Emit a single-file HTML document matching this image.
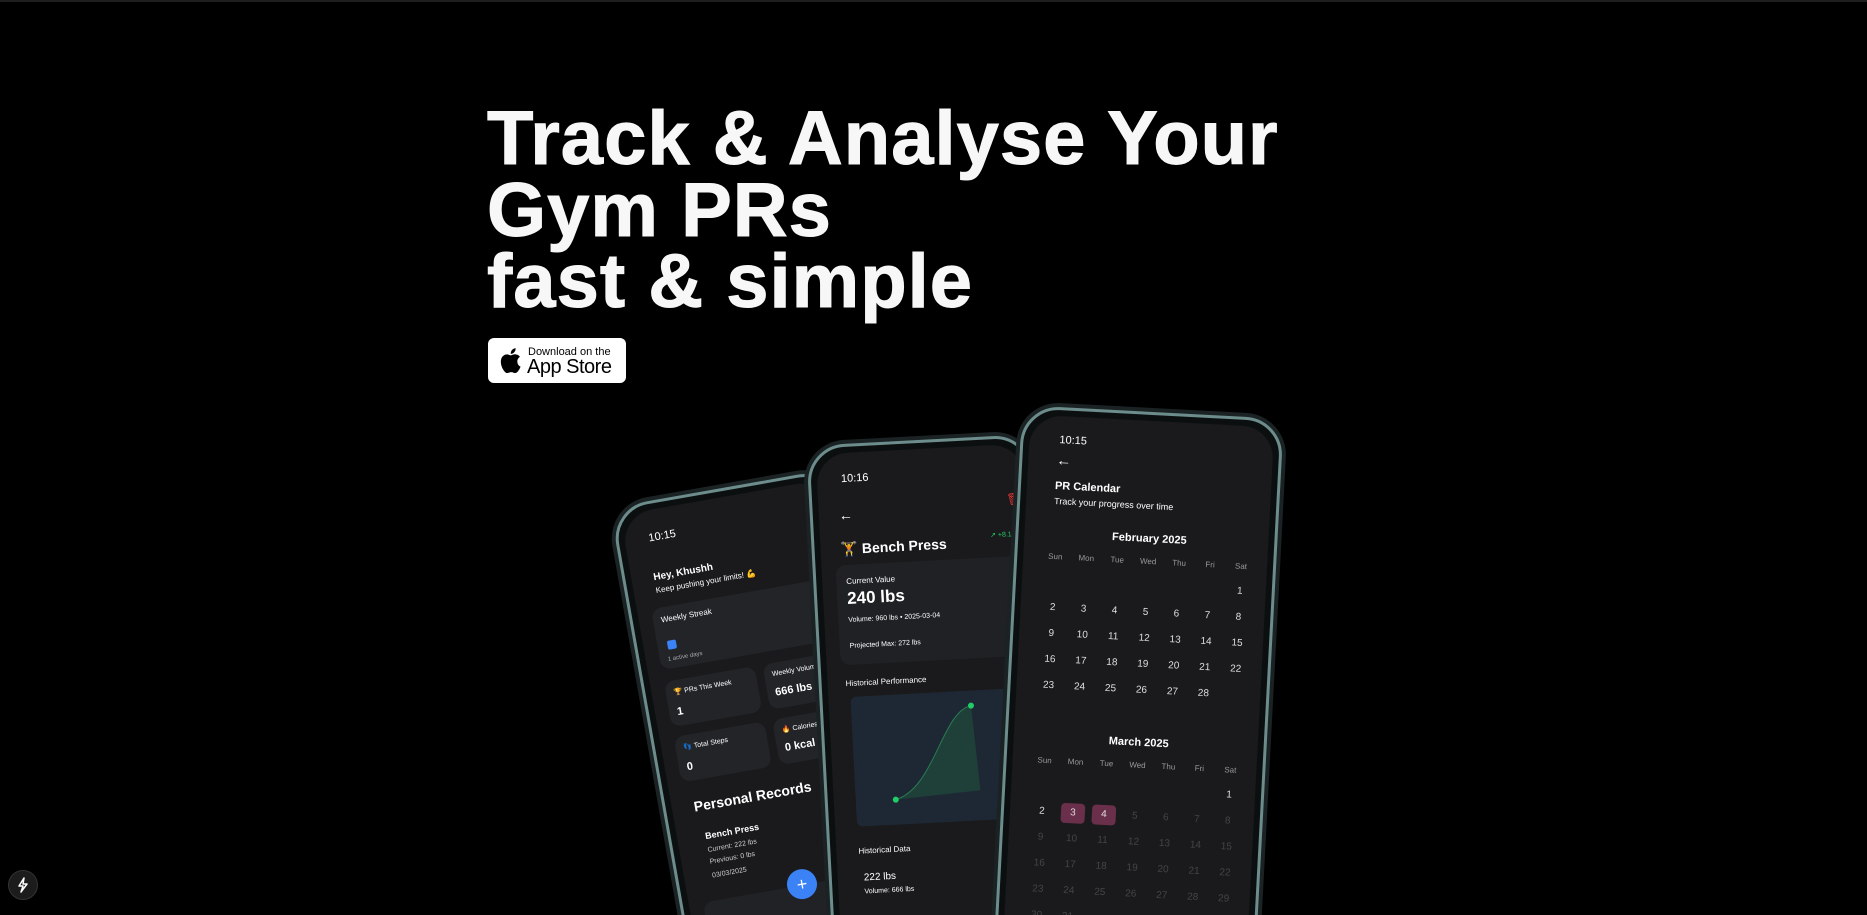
<!DOCTYPE html>
<html><head><meta charset="utf-8"><style>
*{margin:0;padding:0;box-sizing:border-box}
html,body{width:1867px;height:915px;background:#000;overflow:hidden;font-family:"Liberation Sans",sans-serif;color:#fff}
.wrap{position:relative;width:1867px;height:915px;overflow:hidden}
.topline{position:absolute;left:0;top:0;width:1867px;height:2px;background:#1e1e1e}
h1{position:absolute;left:487px;top:103px;font-size:76px;line-height:71.5px;font-weight:700;letter-spacing:1px;color:#f7f7f7;-webkit-text-stroke:1px #f7f7f7}
.btn{position:absolute;left:488px;top:338px;width:138px;height:45px;background:#fff;border-radius:6px;color:#000}
.btn .s{position:absolute;left:40px;top:8px;font-size:11px}
.btn .b{position:absolute;left:39px;top:18px;font-size:20px;letter-spacing:-0.5px}
.phone{position:absolute;border-radius:38px;background:#0c0f10;border:3px solid #6d8c8c;box-shadow:0 0 0 4px #1a2224;overflow:hidden}
.scr{position:absolute;inset:6px;border-radius:32px;background:#1a1a1c;overflow:hidden}
.t{position:absolute;white-space:nowrap}
.card{position:absolute;background:#222428;border-radius:10px}
.bolt{position:absolute;left:8px;top:870px;width:30px;height:30px;border-radius:50%;background:#1c1c1c;border:1px solid #333}
</style></head><body><div class="wrap">
<div class="topline"></div>
<h1>Track &amp; Analyse Your<br>Gym PRs<br>fast &amp; simple</h1>
<div class="btn">
<svg style="position:absolute;left:10px;top:9px" width="24" height="27" viewBox="0 0 24 28"><path fill="#000" d="M19.6 14.9c0-3.2 2.6-4.7 2.7-4.8-1.5-2.2-3.8-2.5-4.6-2.5-1.9-.2-3.8 1.1-4.8 1.1s-2.5-1.1-4.1-1.1C6.7 7.7 4.7 8.9 3.6 10.8c-2.3 4-.6 9.8 1.6 13 1.1 1.6 2.4 3.3 4 3.2 1.6-.1 2.2-1 4.1-1s2.5 1 4.1 1c1.7 0 2.8-1.6 3.800-3.1 1.2-1.8 1.7-3.5 1.7-3.6-.1 0-3.3-1.3-3.3-5.4zM16.5 5.3c.9-1.1 1.5-2.6 1.3-4.1-1.3.1-2.8.9-3.7 1.900-.8.9-1.5 2.5-1.3 4 1.4.1 2.8-.7 3.7-1.8z"/></svg>
<div class="t s">Download on the</div><div class="t b">App Store</div></div>

<!-- phone 1 -->
<div class="phone" style="left:608px;top:488px;width:228px;height:700px;transform:rotate(-10deg);transform-origin:50% 0">
<div class="scr">
<div class="t" style="left:24px;top:22px;font-size:11px">10:15</div>
<div class="t" style="left:22px;top:62px;font-size:10px;font-weight:700">Hey, Khushh</div>
<div class="t" style="left:22px;top:76px;font-size:8px">Keep pushing your limits! 💪</div>
<div class="card" style="left:14px;top:98px;width:200px;height:62px"><div class="t" style="left:8px;top:8px;font-size:8px">Weekly Streak</div><div style="position:absolute;left:10px;top:34px;width:9px;height:9px;border-radius:2px;background:#3b82f6"></div><div class="t" style="left:8px;top:50px;font-size:6px;color:#aaa">1 active days</div></div>
<div class="card" style="left:14px;top:172px;width:92px;height:46px"><div class="t" style="left:8px;top:8px;font-size:7px">🏆 PRs This Week</div><div class="t" style="left:8px;top:26px;font-size:11px;font-weight:700">1</div></div>
<div class="card" style="left:114px;top:172px;width:96px;height:46px"><div class="t" style="left:8px;top:8px;font-size:7px">Weekly Volume</div><div class="t" style="left:8px;top:24px;font-size:11px;font-weight:700">666 lbs</div></div>
<div class="card" style="left:14px;top:228px;width:92px;height:46px"><div class="t" style="left:8px;top:8px;font-size:7px">👣 Total Steps</div><div class="t" style="left:8px;top:26px;font-size:11px;font-weight:700">0</div></div>
<div class="card" style="left:114px;top:228px;width:96px;height:46px"><div class="t" style="left:8px;top:8px;font-size:7px">🔥 Calories Burn</div><div class="t" style="left:8px;top:24px;font-size:11px;font-weight:700">0 kcal</div></div>
<div class="t" style="left:22px;top:292px;font-size:14px;font-weight:700">Personal Records</div>
<div class="t" style="left:28px;top:326px;font-size:9px;font-weight:700">Bench Press</div>
<div class="t" style="left:28px;top:342px;font-size:7px;color:#ccc">Current: 222 lbs</div>
<div class="t" style="left:28px;top:354px;font-size:7px;color:#ccc">Previous: 0 lbs</div>
<div class="t" style="left:28px;top:368px;font-size:7px;color:#ccc">03/03/2025</div>
<div class="card" style="left:14px;top:396px;width:200px;height:40px;background:#202226"></div>
<div style="position:absolute;left:100px;top:380px;width:30px;height:30px;border-radius:50%;background:#3b82f6;text-align:center;line-height:30px;font-size:18px">+</div>
</div></div>

<!-- phone 2 -->
<div class="phone" style="left:806px;top:440px;width:225px;height:700px;transform:rotate(-3deg);transform-origin:50% 0">
<div class="scr">
<div class="t" style="left:24px;top:20px;font-size:11px">10:16</div>
<div class="t" style="left:20px;top:54px;font-size:14px">←</div>
<div class="t" style="left:188px;top:48px;font-size:12px;color:#d33">🗑</div>
<div class="t" style="left:20px;top:88px;font-size:14px;font-weight:700">🏋 Bench Press</div>
<div class="t" style="left:170px;top:86px;font-size:7px;color:#2c6">↗ +8.1%</div>
<div class="card" style="left:14px;top:112px;width:200px;height:100px;background:#1f2124">
<div class="t" style="left:10px;top:12px;font-size:8px">Current Value</div>
<div class="t" style="left:10px;top:24px;font-size:17px;font-weight:700">240 lbs</div>
<div class="t" style="left:10px;top:52px;font-size:7px">Volume: 960 lbs • 2025-03-04</div>
<div class="t" style="left:10px;top:78px;font-size:7px">Projected Max: 272 lbs</div></div>
<div class="t" style="left:18px;top:226px;font-size:8px">Historical Performance</div>
<div style="position:absolute;left:22px;top:244px;width:186px;height:130px;background:#1e2834;border-radius:6px">
<svg width="186" height="130"><path d="M40 105 C80 95 90 20 120 15 L125 100 Z" fill="#1e4a3a" opacity=".7"/><path d="M40 105 C80 95 90 20 120 15" stroke="#2a7a55" fill="none"/><circle cx="40" cy="105" r="3" fill="#2c6"/><circle cx="120" cy="15" r="3" fill="#2c6"/></svg></div>
<div class="t" style="left:22px;top:394px;font-size:8px">Historical Data</div>
<div class="t" style="left:26px;top:420px;font-size:10px">222 lbs</div>
<div class="t" style="left:26px;top:436px;font-size:7px">Volume: 666 lbs</div>
</div></div>

<!-- phone 3 -->
<div class="phone" style="left:1022px;top:412px;width:262px;height:700px;transform:rotate(3deg);transform-origin:50% 0">
<div class="scr">
<div class="t" style="left:30px;top:18px;font-size:11px">10:15</div>
<div class="t" style="left:28px;top:36px;font-size:15px">←</div>
<div class="t" style="left:28px;top:64px;font-size:11px;font-weight:700">PR Calendar</div>
<div class="t" style="left:28px;top:80px;font-size:9px">Track your progress over time</div>
<div class="t" style="left:0;width:250px;text-align:center;top:112px;font-size:11px;font-weight:700">February 2025</div>
<div class="t" style="left:0;width:250px;text-align:center;top:316px;font-size:11px;font-weight:700">March 2025</div>
</div></div>
<script>
function cal(top,startDay,n,dimFrom,hl){
 var s=document.querySelectorAll('.scr')[2];
 var d=['Sun','Mon','Tue','Wed','Thu','Fri','Sat'];
 var h='';
 for(var i=0;i<7;i++)h+='<div class="t" style="left:'+(20+i*31)+'px;width:24px;text-align:center;top:'+top+'px;font-size:8px;color:#999">'+d[i]+'</div>';
 for(var k=1;k<=n;k++){var p=startDay+k-1,c=p%7,r=Math.floor(p/7);
  var col=k>=dimFrom?'#444':'#ddd';var bg=hl.indexOf(k)>=0?'background:#6a2f4a;border-radius:4px;':'';
  h+='<div class="t" style="left:'+(20+c*31)+'px;width:24px;height:20px;line-height:20px;text-align:center;top:'+(top+20+r*26)+'px;font-size:10px;color:'+col+';'+bg+'">'+k+'</div>';}
 s.insertAdjacentHTML('beforeend',h);}
cal(136,6,28,99,[]);cal(340,6,31,5,[3,4]);
</script>

<div class="bolt"><svg width="28" height="28" viewBox="0 0 28 28"><path d="M15 7 L10 15 H14 L12 21 L18 13 H14 Z" fill="none" stroke="#fff" stroke-width="1.5" stroke-linejoin="round"/></svg></div>
</div></body></html>
